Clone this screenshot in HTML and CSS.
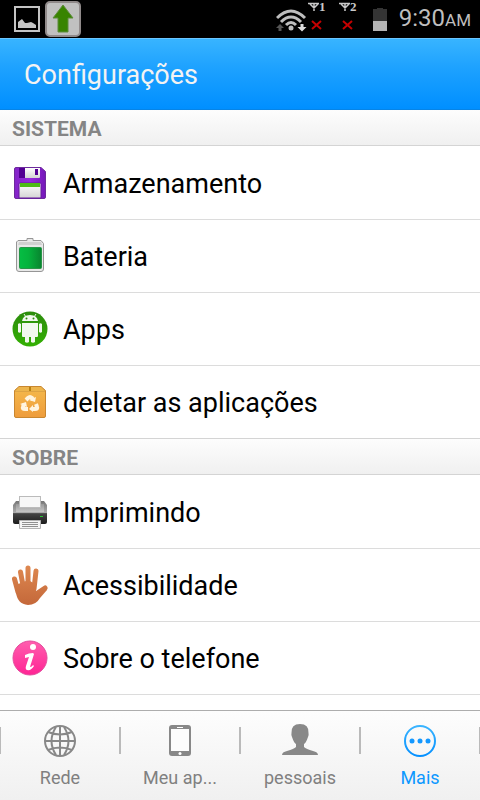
FILE: index.html
```
<!DOCTYPE html>
<html lang="pt-BR">
<head>
    <meta charset="UTF-8">
    <meta name="viewport" content="width=device-width, initial-scale=1.0">
    <title>Configurações</title>
    <link rel="stylesheet" href="styles.css">
</head>
<body>

<div class="status">
    <div class="status-left">
        <svg width="26" height="26" viewBox="0 0 26 26">
            <rect x="1" y="1" width="24" height="24" fill="#000" stroke="#c4c4c4" stroke-width="2"/>
            <path d="M4 22v-6l4-3 3 4h2l4-1 2 1 3 2v3z" fill="#c4c4c4"/>
        </svg>
        <svg width="36" height="36" viewBox="0 0 36 36">
            <rect x="1" y="1" width="34" height="34" rx="4" fill="#c0c0c0" stroke="#908a8a" stroke-width="2"/>
            <path d="M18 4l10 13h-5v14H13V17H8z" fill="#388400" stroke="#5d8c3c" stroke-width="1"/>
        </svg>
    </div>
    <div class="status-right">
        <svg width="114" height="38" viewBox="0 0 114 38">
            <g fill="none" stroke="#bdbdbd" stroke-width="3">
                <path d="M1 18Q15 4 29 18"/>
                <path d="M5 22Q15 12 25 22"/>
                <path d="M10 25Q15 20 20 25"/>
            </g>
            <circle cx="15" cy="28" r="2.500" fill="#bdbdbd"/>
            <path d="M4 24l4 4H5.500v3h-3v-3H0z" fill="#555"/>
            <path d="M24.500 24h3v3h3L26 31.500 21.500 27h3z" fill="#ddd"/>
            <g fill="none" stroke="#c9c9c9" stroke-width="1.500">
                <path d="M32 3.500h11M34 4l4 4 4-4M38 3v8"/>
                <path d="M63 3.500h11M65 4l4 4 4-4M69 3v8"/>
            </g>
            <g fill="none" stroke="#c40000" stroke-width="2">
                <path d="M36 21l9 8M45 21l-9 8M67 21l9 8M76 21l-9 8"/>
            </g>
            <path d="M97 9h4v-1h6v1h4v12H97z" fill="#343434"/>
            <rect x="97" y="21" width="14" height="10" fill="#b4b4b4"/>
            <text class="sim" x="43" y="11">1</text>
            <text class="sim" x="74" y="11">2</text>
        </svg>
        <span class="clock">9:30<small>AM</small></span>
    </div>
</div>

<header class="titlebar">
    <h1>Configurações</h1>
</header>

<main class="settings">
    <h2>SISTEMA</h2>
    <ul>
        <li><a href="#armazenamento">
            <svg width="36" height="36" viewBox="0 0 36 36">
                <defs><linearGradient id="purple" x2="1"><stop stop-color="#8424c8"/><stop offset=".5" stop-color="#9629dc"/><stop offset="1" stop-color="#7417b8"/></linearGradient>
                <linearGradient id="silver" x2="0" y2="1"><stop stop-color="#fff"/><stop offset="1" stop-color="#d4d4d4"/></linearGradient></defs>
                <path d="M4 2.500h25l4.500 4V32q0 1.500-1.500 1.500H4q-1.500 0-1.500-1.500V4q0-1.500 1.500-1.500z" fill="url(#purple)" stroke="#6d2b9c"/>
                <path d="M7 3h17v10H7z" fill="#520092"/>
                <path d="M13 3h15v9q0 1-1 1H13z" fill="url(#silver)"/>
                <rect x="23" y="4" width="3" height="6" fill="#520092"/>
                <path d="M7 33V19q0-1 1-1h20q1 0 1 1v14z" fill="url(#silver)" stroke="#641a9a"/>
                <rect x="8" y="18" width="20" height="4" fill="#4cbb14"/>
            </svg>
            <span>Armazenamento</span>
        </a></li>
        <li><a href="#bateria">
            <svg width="36" height="36" viewBox="0 0 36 36">
                <defs><linearGradient id="charge" x2="1"><stop stop-color="#05bd43"/><stop offset=".4" stop-color="#05b33d"/><stop offset="1" stop-color="#08842f"/></linearGradient></defs>
                <path d="M6 2.500h9v-2h6v2h8l2.500 3V31q0 2.500-2.500 2.500H7q-2.500 0-2.500-2.500V4z" fill="#e8e8e8" stroke="#969696"/>
                <path d="M7 4h22l1 3H6z" fill="#d0d0d0"/>
                <rect x="7.500" y="9.500" width="22" height="21" rx="1" fill="url(#charge)" stroke="#289648"/>
            </svg>
            <span>Bateria</span>
        </a></li>
        <li><a href="#apps">
            <svg width="36" height="36" viewBox="0 0 36 36">
                <defs><linearGradient id="green" x2="0" y2="1"><stop stop-color="#2c8c0c"/><stop offset="1" stop-color="#34b004"/></linearGradient></defs>
                <circle cx="18" cy="18" r="17.500" fill="url(#green)"/>
                <path d="M10 10Q11 4 18 4t8 6zM6 13q1.500-1.500 3 0v8q-1.500 1.500-3 0zM27 13q1.500-1.500 3 0v8q-1.500 1.500-3 0zM10 12h16v13q0 1-1 1h-2v5q-2 1.500-4 0v-5h-2v5q-2 1.500-4 0v-5h-2q-1 0-1-1z" fill="#f2f8ee"/>
                <path d="M12 3l2 3M24 3l-2 3" stroke="#f2f8ee" stroke-width="1"/>
                <circle cx="14.500" cy="7.500" r="1" fill="#2c8c0c"/><circle cx="21.500" cy="7.500" r="1" fill="#2c8c0c"/>
            </svg>
            <span>Apps</span>
        </a></li>
        <li><a href="#deletar">
            <svg width="36" height="36" viewBox="0 0 36 36">
                <defs><linearGradient id="box" x2="0" y2="1"><stop stop-color="#f5ba4c"/><stop offset="1" stop-color="#ee9c3c"/></linearGradient></defs>
                <path d="M7 2.500h22l4.500 4V32q0 1.500-1.500 1.500H4q-1.500 0-1.500-1.500V6.500z" fill="url(#box)" stroke="#c98730"/>
                <path d="M7 3h22l4 4H3z" fill="#edb54c"/>
                <path d="M3 7.500h30M7 3L3 7M29 3l4 4" stroke="#dda344" fill="none"/>
                <rect x="17" y="3" width="2" height="4" fill="#b98210"/>
                <g fill="none" stroke="#fff4df" stroke-width="4">
                    <path d="M14 16l2-2q2-2 4 0l1 2"/>
                    <path d="M24 20l1 3q1 2-2 2h-2"/>
                    <path d="M16 25h-3q-3 0-2-2l1-3"/>
                </g>
                <path d="M17 16l6 2 1-5zM21 21v7l-4-3zM8 20l6-2 1 5z" fill="#fff4df"/>
            </svg>
            <span>deletar as aplicações</span>
        </a></li>
    </ul>

    <h2>SOBRE</h2>
    <ul>
        <li><a href="#imprimindo">
            <svg width="36" height="38" viewBox="0 0 36 38">
                <defs><linearGradient id="printer" x2="0" y2="1"><stop stop-color="#777"/><stop offset=".5" stop-color="#aaa"/><stop offset=".55" stop-color="#444"/><stop offset="1" stop-color="#1c1c1c"/></linearGradient>
                <linearGradient id="tray" x2="0" y2="1"><stop stop-color="#999"/><stop offset="1" stop-color="#c6c6c6"/></linearGradient></defs>
                <path d="M4 8h28l3 4v17q0 2-2 2H3q-2 0-2-2V12z" fill="url(#printer)"/>
                <path d="M4 11h28v8H4z" fill="url(#tray)"/>
                <rect x="7.500" y="3.500" width="21" height="11" fill="#f7f7f7" stroke="#bbb"/>
                <path d="M7.500 27.500h21v8h-21z" fill="#f4f4f4" stroke="#b4b4b4"/>
                <path d="M10 29.500h16M10 31.500h16M10 33.500h16" stroke="#909090"/>
                <rect x="28" y="23" width="3" height="1" fill="#29c334"/>
            </svg>
            <span>Imprimindo</span>
        </a></li>
        <li><a href="#acessibilidade">
            <svg width="36" height="40" viewBox="0 0 36 40">
                <defs><linearGradient id="skin" gradientUnits="userSpaceOnUse" x1="0" y1="0" x2="0" y2="40"><stop stop-color="#de8850"/><stop offset="1" stop-color="#c4683a"/></linearGradient></defs>
                <g fill="none" stroke="url(#skin)" stroke-width="5" stroke-linecap="round" stroke-linejoin="round">
                    <path d="M2.500 14L6 27M8.500 7l3 16M16 3v20M24 6l-2 18M33 23l-9 6"/>
                </g>
                <path d="M3 20l6-2 5-2h4l5 3 1 7q1 1 3 0l6-5 2 4-7 8q-4 7-12 7Q5 39 4 27z" fill="url(#skin)"/>
            </svg>
            <span>Acessibilidade</span>
        </a></li>
        <li><a href="#telefone">
            <svg width="36" height="36" viewBox="0 0 36 36">
                <defs><linearGradient id="pink" x2="0" y2="1"><stop stop-color="#ff5eae"/><stop offset="1" stop-color="#ff2494"/></linearGradient></defs>
                <circle cx="18" cy="18" r="17" fill="url(#pink)" stroke="#e34c9d"/>
                <circle cx="21" cy="7" r="3" fill="#fff"/>
                <path d="M13 15q4-2 8-2l1 1-4 13q2 0 3-2l1 1q-3 5-7 4-2-1-1-4l3-9-4 1z" fill="#fff"/>
            </svg>
            <span>Sobre o telefone</span>
        </a></li>
    </ul>
</main>

<nav class="tabs">
    <a href="#rede">
        <svg width="36" height="36" viewBox="0 0 36 36" fill="none" stroke="#888" stroke-width="2">
            <circle cx="18" cy="18" r="15"/>
            <path d="M18 3v30M3 18h30M14 4q-9 14 0 28M22 4q9 14 0 28M6 9q12 5 24 0M6 27q12-5 24 0"/>
        </svg>
        <span>Rede</span>
    </a>
    <a href="#aparelho">
        <svg width="36" height="36" viewBox="0 0 36 36">
            <rect x="7" y="2" width="22" height="31" rx="3" fill="#888"/>
            <rect x="9" y="6" width="18" height="22" fill="#fcfcfc"/>
            <rect x="15" y="4" width="6" height="1" fill="#fff"/>
            <circle cx="18" cy="30.500" r="1.500" fill="#fff"/>
        </svg>
        <span>Meu ap...</span>
    </a>
    <a href="#pessoais">
        <svg width="36" height="36" viewBox="0 0 36 36">
            <path d="M18 1q9 0 8.500 9 .5 2-.5 4-2 6-4 7v3q2 2 9 4 5 1 5 4H0q0-3 5-4 7-2 9-4v-3q-2-1-4-7-1-2-.5-4Q9 1 18 1z" fill="#888"/>
        </svg>
        <span>pessoais</span>
    </a>
    <a class="active" href="#mais">
        <svg width="36" height="36" viewBox="0 0 36 36">
            <defs><linearGradient id="blue" x2="0" y2="1"><stop stop-color="#3ab4ff"/><stop offset="1" stop-color="#0590ff"/></linearGradient></defs>
            <circle cx="18" cy="18" r="15" fill="none" stroke="url(#blue)" stroke-width="2"/>
            <g fill="#1498ff"><circle cx="10" cy="18" r="2.500"/><circle cx="18" cy="18" r="2.500"/><circle cx="26" cy="18" r="2.500"/></g>
        </svg>
        <span>Mais</span>
    </a>
</nav>

</body>
</html>
```

FILE: styles.css
```
* { margin: 0; padding: 0; box-sizing: border-box; }
body { display: flex; flex-direction: column; height: 100vh; background: #fff; color: #000; font-family: Roboto, sans-serif; overflow: hidden; }
svg { display: block; flex: none; }
a { color: inherit; text-decoration: none; }
ul { list-style: none; }

.status {
    display: flex;
    justify-content: space-between;
    flex: none;
    height: 38px;
    padding: 0 9px 0 14px;
    background: #000;
    color: #bebebe;
}

.status-left, .status-right { display: flex; align-items: center; }
.status-left { gap: 5px; }
.status-right { gap: 9px; }
.sim { font: bold 13px "Liberation Serif", serif; fill: #c9c9c9; }
.clock { font-size: 24px; line-height: 44px; }
.clock small { font-size: 17px; }

.titlebar {
    flex: none;
    height: 72px;
    padding: 0 24px;
    background: linear-gradient(#38b4ff, #1ea2ff 40%, #008fff);
    border-top: 1px solid #6cc6ff;
    border-bottom: 1px solid #0784e6;
}

h1 { font-size: 27px; font-weight: 400; line-height: 73px; color: #f3f3f3; }

.settings { flex: 1; min-height: 0; overflow: hidden; }

h2 {
    height: 36px;
    padding: 0 12px;
    font-size: 21px;
    font-weight: 700;
    line-height: 39px;
    color: #858585;
    background: linear-gradient(#fdfdfd, #f0f0f0);
    border-bottom: 1px solid #d4d4d4;
}

ul + h2 { height: 37px; border-top: 1px solid #d4d4d4; }

.settings li { border-top: 1px solid #dcdcdc; }
.settings li:first-child { border-top-color: transparent; }
.settings ul:last-child { border-bottom: 1px solid #dcdcdc; }
.settings li a { display: flex; align-items: center; gap: 15px; height: 72px; padding: 0 12px; font-size: 27px; line-height: 32px; }
.settings li span { padding-top: 2px; }

.tabs {
    display: flex;
    flex: none;
    height: 90px;
    background: linear-gradient(#fdfdfd, #f0f0f0);
    border-top: 1px solid #adadad;
    color: #808080;
}

.tabs a {
    display: flex;
    flex: 1;
    flex-direction: column;
    align-items: center;
    gap: 7px;
    padding-top: 12px;
    font-size: 18px;
    line-height: 24px;
    background: linear-gradient(#bababa, #bababa) 0 16px / 1px 27px no-repeat, linear-gradient(#bababa, #bababa) 100% 16px / 1px 27px no-repeat;
}

.tabs .active { color: #0c98ff; }
```
